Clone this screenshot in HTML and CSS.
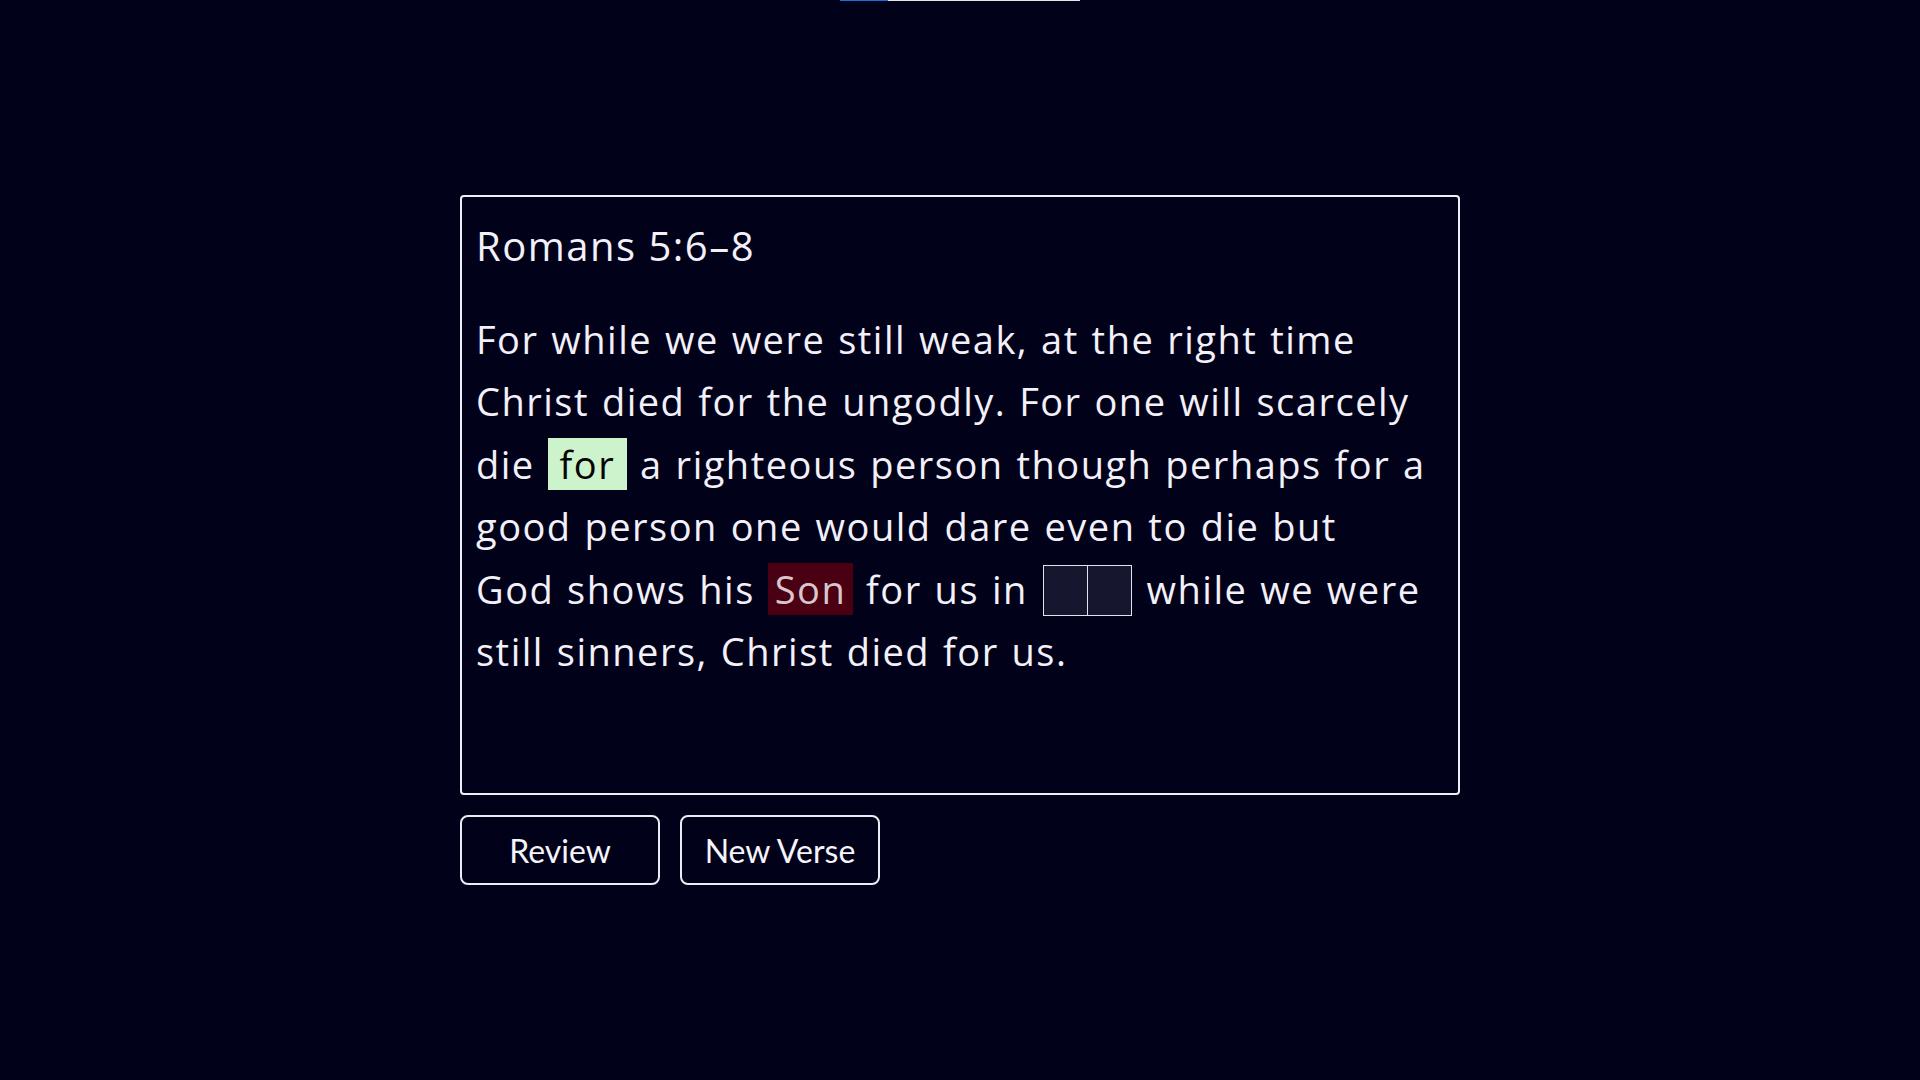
FILE: index.html
```html
<!DOCTYPE html>
<html lang="en">
<head>
<meta charset="utf-8">
<title>Verse Memory</title>
<link rel="stylesheet" href="styles.css">
</head>
<body>
<div class="progress"><div class="progress-fill" style="width: 20%"></div></div>
<main class="main">
  <section class="card">
    <h1 class="ref">Romans 5:6–8</h1>
    <p class="verse">For while we were still weak, at the right time Christ died for the ungodly. For one will scarcely die <span class="word correct">for</span> a righteous person though perhaps for a good person one would dare even to die but<br>God shows his <span class="word wrong">Son</span> for us in <span class="blank"><span class="cell"></span><span class="cell"></span></span> while we were still sinners, Christ died for us.</p>
  </section>
  <div class="actions">
    <button class="btn">Review</button>
    <button class="btn">New Verse</button>
  </div>
</main>
</body>
</html>
```
FILE: styles.css
```css
html, body {
  margin: 0;
  padding: 0;
}
body {
  background: #02011a;
  color: #f2f0f8;
  font-family: "Open Sans", "Noto Sans", sans-serif;
  min-height: 1080px;
}
.progress {
  width: 240px;
  height: 1px;
  margin: 0 auto;
  background: #e6e6ea;
}
.progress-fill {
  height: 100%;
  background: #1a6fd0;
}
.main {
  width: 1000px;
  margin: 194px auto 0;
}
.card {
  box-sizing: border-box;
  height: 600px;
  border: 2px solid #f0f0f4;
  border-radius: 4px;
  padding: 25px 14px 16px;
  letter-spacing: 1.5px;
}
.ref {
  margin: 0;
  font-size: 40px;
  font-weight: 400;
  line-height: 48px;
}
.verse {
  margin: 38px 0 0;
  font-size: 38px;
  line-height: 62.4px;
  word-spacing: 1.5px;
}
.correct {
  background: #cdf3cc;
  color: #050505;
  padding: 0 12px;
}
.wrong {
  background: #4a0012;
  color: #d9c6cc;
  padding: 0 7px;
}
.blank {
  display: inline-flex;
  margin: 0 2px;
  vertical-align: -11px;
  border: 1px solid #e2e2ea;
  background: #16162e;
}
.cell {
  width: 43px;
  height: 49px;
}
.cell + .cell {
  border-left: 1px solid #e2e2ea;
}
.actions {
  display: flex;
  gap: 20px;
  margin-top: 20px;
}
.btn {
  width: 200px;
  height: 70px;
  background: transparent;
  border: 2px solid #ececf2;
  border-radius: 8px;
  color: #f4f4fa;
  font-family: Lato, "Noto Sans", sans-serif;
  font-size: 32px;
  cursor: pointer;
}
```
